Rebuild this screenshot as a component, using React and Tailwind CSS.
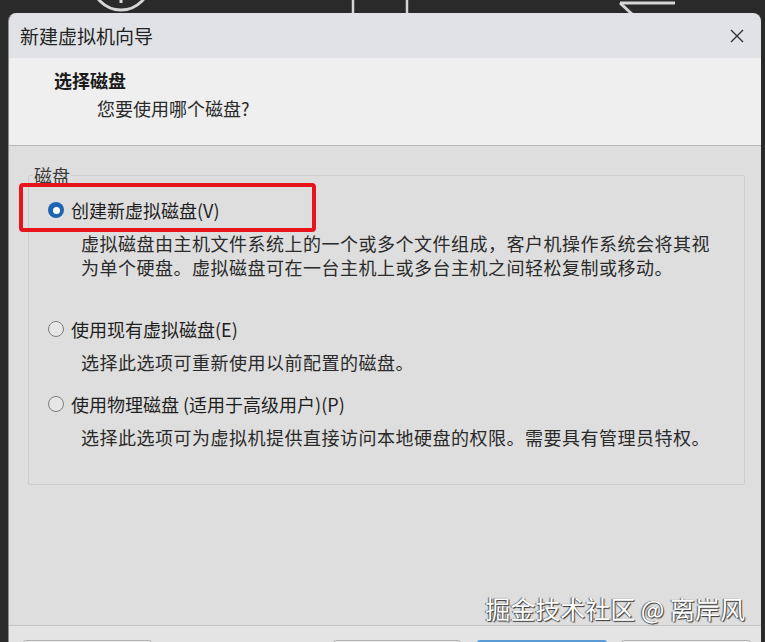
import React from "react";

const FONT = { fontFamily: '"Noto Sans CJK SC", "Noto Sans", sans-serif' };

function Radio({ checked }) {
  if (checked) {
    return (
      <span className="flex h-[16px] w-[16px] shrink-0 items-center justify-center rounded-full bg-[#1f64b0]">
        <span className="h-[7px] w-[7px] rounded-full bg-white" />
      </span>
    );
  }
  return (
    <span className="h-[16px] w-[16px] shrink-0 rounded-full border border-[#7d7d7d] bg-[#e6e6e6]" />
  );
}

function Option({ checked, label, children, className }) {
  return (
    <div className={className}>
      <div className="flex h-[24px] items-center gap-[7px]">
        <Radio checked={checked} />
        <span className="text-[18px] leading-[24px] text-[#1e1e1e]">{label}</span>
      </div>
      <div className="ml-[33px] mt-[9px] text-[18px] leading-[24px] tracking-[0.5px] text-[#2a2a2a]">
        {children}
      </div>
    </div>
  );
}

export default function App() {
  return (
    <div
      className="relative h-[642px] w-[765px] overflow-hidden bg-[#2a2a2a]"
      style={FONT}
    >
      <svg width="765" height="13" className="block">
        <circle cx="121" cy="-19" r="29" fill="none" stroke="#d6d6d6" strokeWidth="3" />
        <line x1="121" y1="0" x2="121" y2="3" stroke="#d6d6d6" strokeWidth="3" />
        <line x1="353" y1="0" x2="353" y2="13" stroke="#d6d6d6" strokeWidth="2.5" />
        <line x1="407" y1="0" x2="407" y2="13" stroke="#d6d6d6" strokeWidth="2.5" />
        <line x1="620" y1="3" x2="675" y2="3" stroke="#d6d6d6" strokeWidth="3" />
        <line x1="620" y1="3" x2="632" y2="14" stroke="#d6d6d6" strokeWidth="3" />
      </svg>

      <div className="ml-[8px] flex h-[658px] w-[753px] flex-col overflow-hidden rounded-t-[8px] border-l border-[#8c8c8c]">
        {/* Title bar */}
        <div className="flex h-[45px] shrink-0 items-center justify-between bg-[#e1e2e6] pl-[11px] pr-[17px]">
          <span className="text-[19px] leading-[24px] text-[#222]">新建虚拟机向导</span>
          <svg width="14" height="14" viewBox="0 0 14 14">
            <path d="M1 1L13 13M13 1L1 13" stroke="#333" strokeWidth="1.4" />
          </svg>
        </div>

        {/* Header */}
        <div className="h-[88px] shrink-0 border-b border-[#b9b9b9] bg-[#efefef] pl-[45px] pt-[10px]">
          <div className="text-[18px] font-bold leading-[24px] text-[#1a1a1a]">选择磁盘</div>
          <div className="ml-[43px] mt-[4px] text-[18px] leading-[24px] text-[#2a2a2a]">
            您要使用哪个磁盘?
          </div>
        </div>

        {/* Body */}
        <div className="relative h-[479px] shrink-0 bg-[#dedede]">
          <fieldset className="ml-[19px] mr-[16px] mt-[18px] rounded-[2px] border border-[#cdcdcd] pb-[35px]">
            <legend className="ml-[4px] px-[1px] text-[18px] leading-[22px] text-[#3a3a3a]">磁盘</legend>
            <div className="pl-[19px]">
              <Option className="mt-[12px]" checked label="创建新虚拟磁盘(V)">
                <div>虚拟磁盘由主机文件系统上的一个或多个文件组成，客户机操作系统会将其视</div>
                <div>为单个硬盘。虚拟磁盘可在一台主机上或多台主机之间轻松复制或移动。</div>
              </Option>
              <Option className="mt-[38px]" label="使用现有虚拟磁盘(E)">
                选择此选项可重新使用以前配置的磁盘。
              </Option>
              <Option className="mt-[18px]" label="使用物理磁盘 (适用于高级用户)(P)">
                选择此选项可为虚拟机提供直接访问本地硬盘的权限。需要具有管理员特权。
              </Option>
            </div>
          </fieldset>

          {/* annotation */}
          <div className="absolute left-[10px] top-[37px] h-[49px] w-[297px] rounded-[4px] border-[4px] border-[#e8141b]" />

          {/* watermark */}
          <div className="absolute bottom-[2px] right-[16px] text-[25px] leading-[30px] text-white [text-shadow:1px_1px_1px_#333,-1px_0_1px_#555]">
            掘金技术社区 @ 离岸风
          </div>
        </div>

        {/* Footer: buttons are cut off by the window edge, labels not visible */}
        <div className="flex shrink-0 items-start border-t border-[#c4c4c4] bg-[#e4e4e4] pl-[14px] pt-[14px]">
          <button aria-label="帮助" className="h-[30px] w-[129px] rounded-[3px] border border-[#b0b0b0] bg-[#efefef]" />
          <button aria-label="上一步(B)" className="ml-[181px] h-[30px] w-[128px] rounded-[3px] border border-[#b0b0b0] bg-[#efefef]" />
          <button aria-label="下一步(N)" className="ml-[16px] h-[30px] w-[130px] rounded-[3px] border-2 border-[#5b9bd5] bg-[#efefef]" />
          <button aria-label="取消" className="ml-[14px] h-[30px] w-[130px] rounded-[3px] border border-[#b0b0b0] bg-[#efefef]" />
        </div>
      </div>
    </div>
  );
}
